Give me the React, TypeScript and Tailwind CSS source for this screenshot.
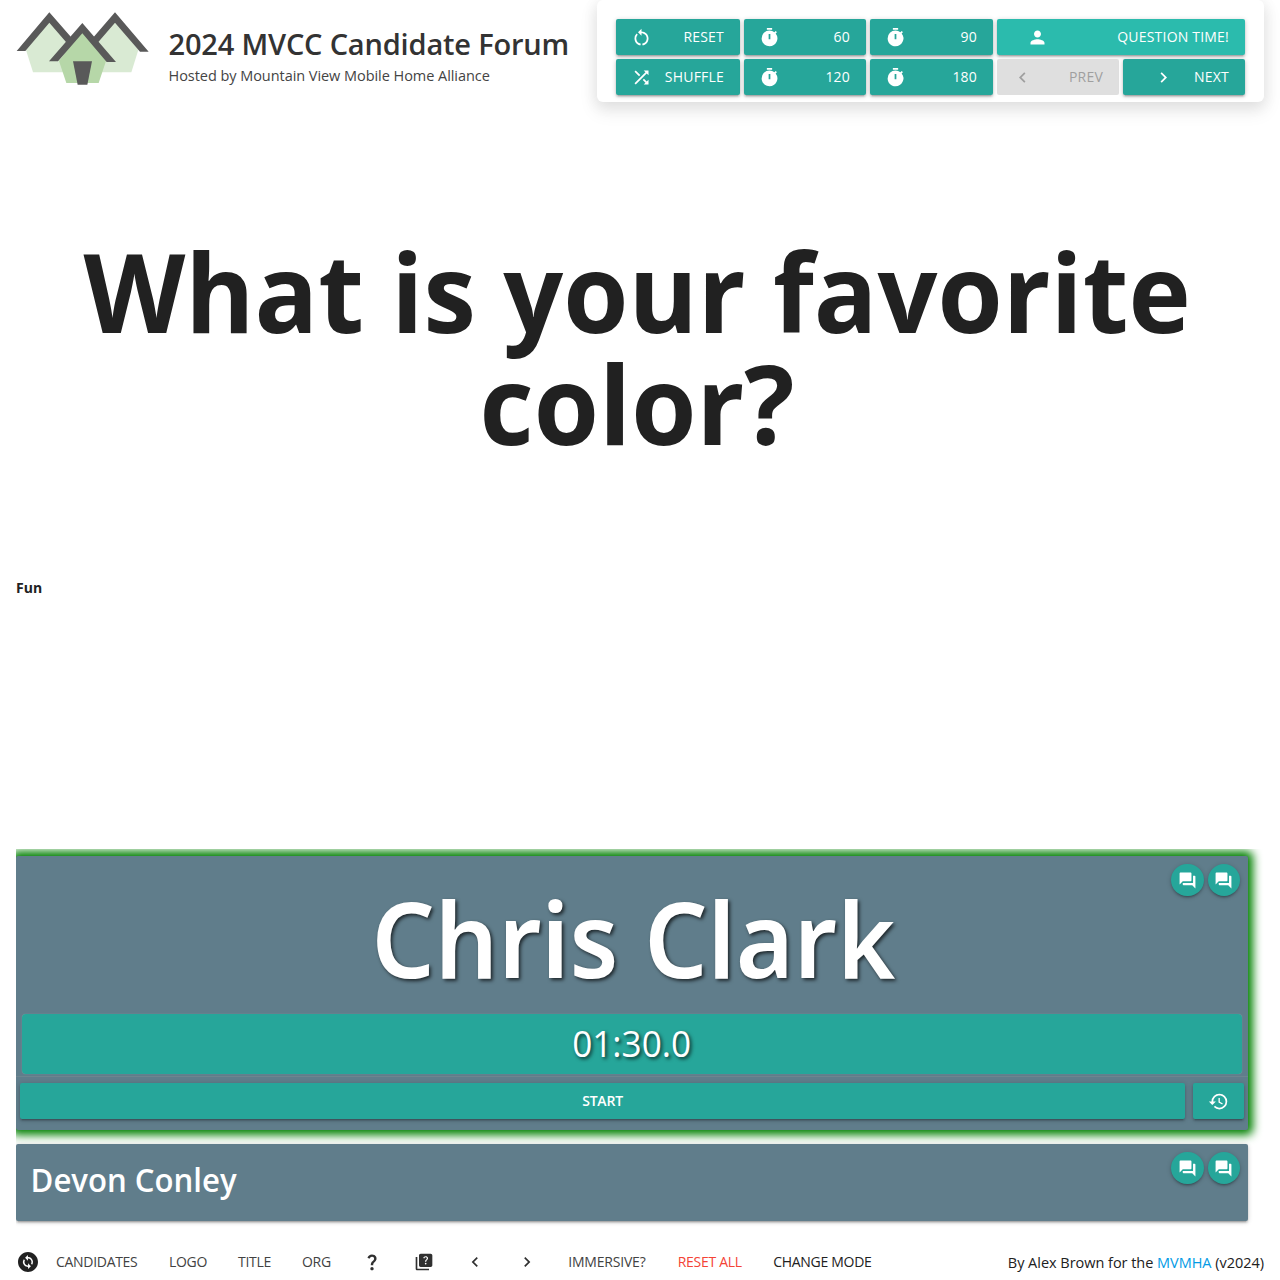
import React from 'react';
import type { IconType } from 'react-icons';
import {
  MdChangeCircle, MdChevronLeft, MdChevronRight, MdForum, MdHistory, MdPerson,
  MdQuestionMark, MdQuiz, MdRestartAlt, MdShuffle, MdTimer,
} from 'react-icons/md';

const RAISED = 'shadow-[0_2px_2px_0_rgba(0,0,0,0.14),0_3px_1px_-2px_rgba(0,0,0,0.12),0_1px_5px_0_rgba(0,0,0,0.2)]';

function Logo() {
  return (
    <svg className="h-[73px] w-[133px] shrink-0" viewBox="48 36 399 219">
      <polygon fill="#d9ead3" points="148,60 78,150 99,217 210,217 215,120" />
      <polygon fill="#d9ead3" points="345,60 415,150 394,217 280,217 280,120" />
      <polygon fill="#595959" points="148,37 50,153 76,153 148,68 198,126 226,126" />
      <polygon fill="#595959" points="345,37 446,155 420,155 345,68 295,126 268,126" />
      <polygon fill="#b6d7a8" points="247,90 177,183 199,249 296,249 318,183" />
      <polygon fill="#595959" points="247,69 147,184 174,184 247,100 320,186 348,186" />
      <polygon fill="#595959" points="219,184 276,184 262,254 233,254" />
    </svg>
  );
}

function ControlButton({ icon: Icon, label, className = '', disabled = false }: {
  icon: IconType; label: string; className?: string; disabled?: boolean;
}) {
  const tone = disabled ? 'bg-[#dfdfdf] text-[#9f9f9f]' : `text-white ${RAISED}`;
  return (
    <button className={`flex h-9 items-center justify-between rounded-[2px] pr-4 text-[14px] tracking-[0.2px] ${tone} ${className}`}>
      <Icon className="size-[21px]" />
      <span className="pb-[2px]">{label}</span>
    </button>
  );
}

function ChatButtons() {
  return (
    <div className="absolute top-2 right-2 flex gap-1">
      {[0, 1].map((i) => (
        <button key={i} className={`flex h-8 w-[32.5px] items-center justify-center rounded-full bg-[#26a69a] text-white ${RAISED}`}>
          <MdForum className="size-[19px]" />
        </button>
      ))}
    </div>
  );
}

function FooterIcon({ icon: Icon }: { icon: IconType }) {
  return (
    <button className="flex w-[51.7px] justify-center text-[#303030]">
      <Icon className="size-5" />
    </button>
  );
}

function FooterLink({ label, className = '' }: { label: string; className?: string }) {
  return <span className={`pb-[2px] ${className}`}>{label}</span>;
}

export default function App() {
  return (
    <div className="flex h-[1280px] w-[1280px] flex-col overflow-hidden bg-white font-['Open_Sans','Noto_Sans',sans-serif] text-[#212121]">
      <header className="flex h-[102px] shrink-0 justify-between px-4">
        <div className="flex pt-3">
          <Logo />
          <div className="pt-3 pl-[19.5px]">
            <h1 className="text-[29px] leading-[40px] font-semibold tracking-[-0.18px] whitespace-nowrap text-[#333]">2024 MVCC Candidate Forum</h1>
            <p className="pt-px text-[14.5px] leading-[22px] tracking-[-0.05px] whitespace-nowrap text-[#444]">Hosted by Mountain View Mobile Home Alliance</p>
          </div>
        </div>
        <div className="grid w-[667px] grid-cols-[124px_122px_123px_122px_122px] content-start gap-1 rounded-[6px] bg-white pt-[19px] pl-[19px] shadow-[0_8px_17px_2px_rgba(0,0,0,0.08),0_3px_14px_2px_rgba(0,0,0,0.06)]">
          <ControlButton icon={MdRestartAlt} label="RESET" className="bg-[#26a69a] pl-[15px]" />
          <ControlButton icon={MdTimer} label="60" className="bg-[#26a69a] pl-[15px]" />
          <ControlButton icon={MdTimer} label="90" className="bg-[#26a69a] pl-[15px]" />
          <ControlButton icon={MdPerson} label="QUESTION TIME!" className="col-span-2 bg-[#2bbbad] pl-[30px]" />
          <ControlButton icon={MdShuffle} label="SHUFFLE" className="bg-[#26a69a] pl-[15px]" />
          <ControlButton icon={MdTimer} label="120" className="bg-[#26a69a] pl-[15px]" />
          <ControlButton icon={MdTimer} label="180" className="bg-[#26a69a] pl-[15px]" />
          <ControlButton icon={MdChevronLeft} label="PREV" className="pl-[15px]" disabled />
          <ControlButton icon={MdChevronRight} label="NEXT" className="bg-[#26a69a] pl-[30px]" />
        </div>
      </header>

      <main className="flex h-[747px] shrink-0 flex-col px-4">
        <h2 className="-mr-4 -ml-4 scale-x-[0.967] pt-[133px] pr-[6px] text-center text-[109px] leading-[112px] font-bold">
          What is your favorite<br />color?
        </h2>
        <p className="pt-[117px] text-[14px] leading-6 font-bold">Fun</p>
      </main>

      <section className="ml-4 h-[389px] shrink-0 overflow-hidden pt-[7px] pr-8">
        <article className="relative h-[274px] rounded-[2px] bg-[#607d8b] text-white shadow-[0_0_10px_5px_green]">
          <ChatButtons />
          <h3 className="h-[158px] scale-x-[0.946] pt-[12px] pl-[3px] text-center font-['Noto_Sans'] text-[105px] leading-[140px] font-semibold [text-shadow:2px_2px_4px_rgba(0,0,0,0.7)]">Chris Clark</h3>
          <div className="mx-1.5 flex h-[60px] items-center justify-center rounded-[4px] bg-[#26a69a] pb-1 shadow-[0_0_1px_#8fa9a9]">
            <span className="scale-x-[0.95] text-[37px] leading-none [text-shadow:2px_2px_4px_rgba(0,0,0,0.7)]">01:30.0</span>
          </div>
          <div className="mt-0.5 flex gap-2 border-t border-[#6e858f] px-1 pt-1.5">
            <button className={`h-9 grow rounded-[2px] bg-[#26a69a] pb-[2px] text-[14px] font-semibold tracking-[-0.2px] ${RAISED}`}>START</button>
            <button className={`flex h-9 w-[51px] items-center justify-center rounded-[2px] bg-[#26a69a] ${RAISED}`}>
              <MdHistory className="size-[21px]" />
            </button>
          </div>
        </article>
        <article className={`relative mt-3.5 h-[77px] rounded-[2px] bg-[#607d8b] text-white ${RAISED}`}>
          <ChatButtons />
          <h3 className="origin-left scale-x-[0.943] pt-3 pl-[15.5px] text-[33px] leading-[48px] font-semibold">Devon Conley</h3>
        </article>
      </section>

      <footer className="flex h-[42px] shrink-0 items-center pt-[6px] pr-4 pl-4 text-[14px] tracking-[-0.3px] whitespace-nowrap text-[#424242]">
        <MdChangeCircle className="size-6 text-[#212121]" />
        <FooterLink label="CANDIDATES" className="w-[113px] pl-4" />
        <FooterLink label="LOGO" className="w-[69px] pl-4" />
        <FooterLink label="TITLE" className="w-[64px] pl-4" />
        <FooterLink label="ORG" className="w-[60px] pl-4" />
        <FooterIcon icon={MdQuestionMark} />
        <FooterIcon icon={MdQuiz} />
        <FooterIcon icon={MdChevronLeft} />
        <FooterIcon icon={MdChevronRight} />
        <FooterLink label="IMMERSIVE?" className="w-[109.5px] pl-[15.5px] tracking-[-0.2px]" />
        <FooterLink label="RESET ALL" className="w-[95.5px] pl-[15.5px] text-[#f44336]" />
        <FooterLink label="CHANGE MODE" className="pl-[15.5px] text-[#212121]" />
        <span className="ml-auto pt-px text-[14.5px] tracking-[-0.03px] text-[#212121]">By Alex Brown for the <a className="text-[#039be5]">MVMHA</a> (v2024)</span>
      </footer>
    </div>
  );
}
